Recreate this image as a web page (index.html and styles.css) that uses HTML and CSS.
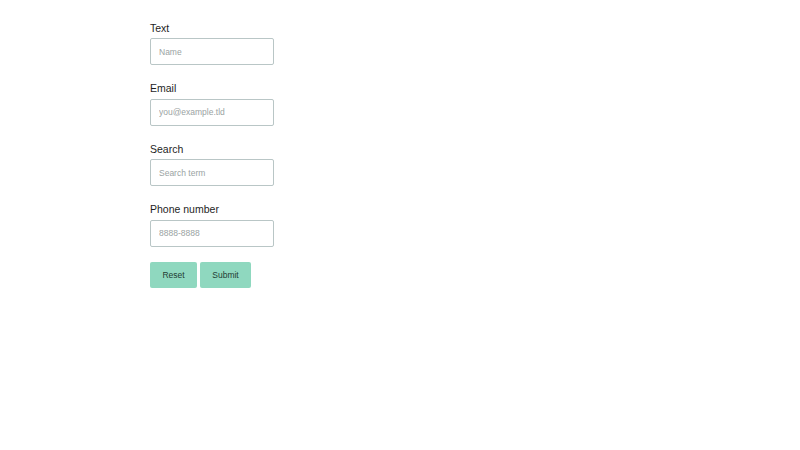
FILE: index.html
```html
<!DOCTYPE html>
<html>
<head>
<meta charset="utf-8">
<link rel="stylesheet" href="styles.css">
</head>
<body>
<form class="form">
  <div class="field">
    <label class="label" for="f-text">Text</label>
    <input class="input" id="f-text" type="text" placeholder="Name">
  </div>
  <div class="field">
    <label class="label" for="f-email">Email</label>
    <input class="input" id="f-email" type="email" placeholder="you@example.tld">
  </div>
  <div class="field">
    <label class="label" for="f-search">Search</label>
    <input class="input" id="f-search" type="search" placeholder="Search term">
  </div>
  <div class="field">
    <label class="label" for="f-tel">Phone number</label>
    <input class="input" id="f-tel" type="tel" placeholder="8888-8888">
  </div>
  <div class="actions">
    <button class="btn btn-reset" type="reset">Reset</button>
    <button class="btn btn-submit" type="submit">Submit</button>
  </div>
</form>
</body>
</html>
```
FILE: styles.css
```css
html, body {
  margin: 0;
  padding: 0;
  background: #ffffff;
}
body {
  font-family: "Liberation Sans", Arial, sans-serif;
  color: #222222;
}
.form {
  display: flex;
  flex-direction: column;
  gap: 15px;
  padding: 19.5px 0 0 150px;
}
.field {
  display: flex;
  flex-direction: column;
  align-items: flex-start;
  gap: 2px;
}
.label {
  font-size: 10.5px;
  line-height: 16.5px;
  color: #1e1e1e;
}
.input {
  box-sizing: border-box;
  width: 124px;
  height: 27px;
  margin: 0;
  padding: 0 8px;
  border: 1px solid #b9c6c6;
  border-radius: 2px;
  background: #ffffff;
  font-family: "Liberation Sans", Arial, sans-serif;
  font-size: 8.5px;
  color: #333333;
  outline: none;
  -webkit-appearance: none;
  appearance: none;
}
.input::placeholder {
  color: #9aa3a3;
}
.actions {
  display: flex;
  gap: 3px;
}
.btn {
  box-sizing: border-box;
  height: 26px;
  margin: 0;
  padding: 0 12px;
  border: none;
  border-radius: 2px;
  background: #8fd8bf;
  color: #1f3d33;
  font-family: "Liberation Sans", Arial, sans-serif;
  font-size: 8.5px;
  cursor: pointer;
}
.btn-reset { width: 47px; }
.btn-submit { width: 51px; }
```
